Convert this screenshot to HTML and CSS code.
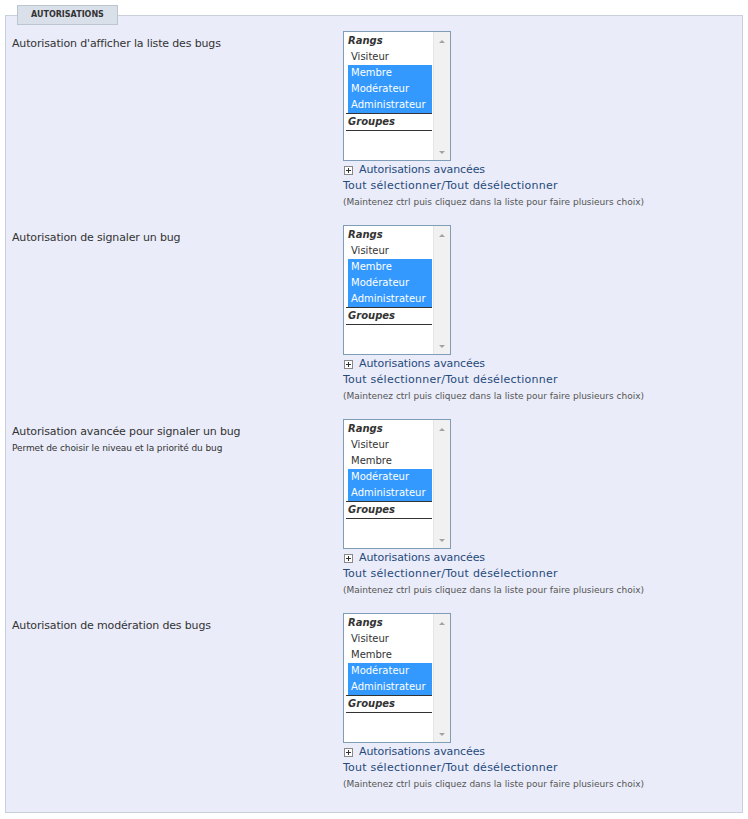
FILE: index.html
```html
<!DOCTYPE html>
<html lang="fr">
<head>
<meta charset="utf-8">
<title>Autorisations</title>
<link rel="stylesheet" href="styles.css">
</head>
<body>
<fieldset class="panel">
  <legend class="panel-title">AUTORISATIONS</legend>

  <div class="row">
    <div class="label">Autorisation d'afficher la liste des bugs</div>
    <div class="field">
      <div class="listbox">
        <div class="list">
          <div class="group">
            <div class="group-label">Rangs</div>
            <div class="opt">Visiteur</div>
            <div class="opt sel">Membre</div>
            <div class="opt sel">Modérateur</div>
            <div class="opt sel">Administrateur</div>
          </div>
          <div class="group">
            <div class="group-label">Groupes</div>
          </div>
        </div>
        <div class="scrollbar"><span class="arrow up"></span><span class="arrow down"></span></div>
      </div>
      <a class="advanced" href="#"><span class="plus"></span>Autorisations avancées</a>
      <a class="toggle" href="#">Tout sélectionner/Tout désélectionner</a>
      <div class="hint">(Maintenez ctrl puis cliquez dans la liste pour faire plusieurs choix)</div>
    </div>
  </div>

  <div class="row">
    <div class="label">Autorisation de signaler un bug</div>
    <div class="field">
      <div class="listbox">
        <div class="list">
          <div class="group">
            <div class="group-label">Rangs</div>
            <div class="opt">Visiteur</div>
            <div class="opt sel">Membre</div>
            <div class="opt sel">Modérateur</div>
            <div class="opt sel">Administrateur</div>
          </div>
          <div class="group">
            <div class="group-label">Groupes</div>
          </div>
        </div>
        <div class="scrollbar"><span class="arrow up"></span><span class="arrow down"></span></div>
      </div>
      <a class="advanced" href="#"><span class="plus"></span>Autorisations avancées</a>
      <a class="toggle" href="#">Tout sélectionner/Tout désélectionner</a>
      <div class="hint">(Maintenez ctrl puis cliquez dans la liste pour faire plusieurs choix)</div>
    </div>
  </div>

  <div class="row">
    <div class="label">Autorisation avancée pour signaler un bug
      <span class="sublabel">Permet de choisir le niveau et la priorité du bug</span></div>
    <div class="field">
      <div class="listbox">
        <div class="list">
          <div class="group">
            <div class="group-label">Rangs</div>
            <div class="opt">Visiteur</div>
            <div class="opt">Membre</div>
            <div class="opt sel">Modérateur</div>
            <div class="opt sel">Administrateur</div>
          </div>
          <div class="group">
            <div class="group-label">Groupes</div>
          </div>
        </div>
        <div class="scrollbar"><span class="arrow up"></span><span class="arrow down"></span></div>
      </div>
      <a class="advanced" href="#"><span class="plus"></span>Autorisations avancées</a>
      <a class="toggle" href="#">Tout sélectionner/Tout désélectionner</a>
      <div class="hint">(Maintenez ctrl puis cliquez dans la liste pour faire plusieurs choix)</div>
    </div>
  </div>

  <div class="row">
    <div class="label">Autorisation de modération des bugs</div>
    <div class="field">
      <div class="listbox">
        <div class="list">
          <div class="group">
            <div class="group-label">Rangs</div>
            <div class="opt">Visiteur</div>
            <div class="opt">Membre</div>
            <div class="opt sel">Modérateur</div>
            <div class="opt sel">Administrateur</div>
          </div>
          <div class="group">
            <div class="group-label">Groupes</div>
          </div>
        </div>
        <div class="scrollbar"><span class="arrow up"></span><span class="arrow down"></span></div>
      </div>
      <a class="advanced" href="#"><span class="plus"></span>Autorisations avancées</a>
      <a class="toggle" href="#">Tout sélectionner/Tout désélectionner</a>
      <div class="hint">(Maintenez ctrl puis cliquez dans la liste pour faire plusieurs choix)</div>
    </div>
  </div>
</fieldset>
</body>
</html>
```

FILE: styles.css
```css
html, body {
  margin: 0;
  padding: 0;
  background: #ffffff;
}

body {
  font-family: "DejaVu Sans", Verdana, sans-serif;
  font-size: 11px;
  color: #333333;
}

.panel {
  margin: 5px 0 0 5px;
  width: 738px;
  box-sizing: border-box;
  border: 1px solid #c9d0dc;
  background: #eaecf9;
  padding: 0 6px 11px 6px;
  min-inline-size: 0;
}

.panel-title {
  margin-left: 5px;
  padding: 0 13px;
  height: 20px;
  box-sizing: border-box;
  line-height: 18px;
  border: 1px solid #bcc5d0;
  background: #d9e0ea;
  font-size: 8px;
  font-weight: bold;
  color: #333;
}

.row {
  display: grid;
  grid-template-columns: 331px 1fr;
  padding: 6px 0 9px 0;
}

.label {
  padding-top: 5px;
  line-height: 16px;
  letter-spacing: -0.15px;
}

.sublabel {
  display: block;
  font-size: 9px;
  line-height: 16px;
  letter-spacing: -0.1px;
}

.field {
  display: flex;
  flex-direction: column;
  align-items: flex-start;
}

.listbox {
  width: 108px;
  height: 130px;
  box-sizing: border-box;
  border: 1px solid #7f9db9;
  background: #fff;
  display: flex;
  margin-bottom: 1px;
}

.list {
  flex: 1;
  padding: 1px 1px 0 2px;
}

.group {
  border-bottom: 1px solid #333;
}

.group-label {
  height: 16px;
  line-height: 16px;
  padding-left: 2px;
  font-style: italic;
  font-weight: bold;
  font-size: 10px;
  color: #333;
}

.opt {
  height: 16px;
  line-height: 16px;
  margin-left: 2px;
  padding-left: 3px;
  font-size: 10px;
  color: #333;
  white-space: nowrap;
}

.opt.sel {
  background: #3399ff;
  color: #ffffff;
}

.scrollbar {
  width: 17px;
  background: #f1f1f1;
  border-left: 1px solid #e6e6e6;
  display: flex;
  flex-direction: column;
  justify-content: space-between;
  align-items: center;
  padding: 8px 0 6px;
  box-sizing: border-box;
}

.arrow {
  width: 0;
  height: 0;
  border-left: 3px solid transparent;
  border-right: 3px solid transparent;
}

.arrow.up {
  border-bottom: 3px solid #a3a3a3;
}

.arrow.down {
  border-top: 3px solid #a3a3a3;
}

.advanced, .toggle {
  color: #264a7b;
  text-decoration: none;
  line-height: 16px;
  height: 16px;
}

.advanced {
  display: flex;
  align-items: center;
  letter-spacing: -0.1px;
}

.toggle {
  letter-spacing: 0.25px;
}

.plus {
  width: 9px;
  height: 9px;
  box-sizing: border-box;
  border: 1px solid #888;
  background: #fff;
  margin: 0 6px 0 1px;
  background-image:
    linear-gradient(#333, #333),
    linear-gradient(#333, #333);
  background-size: 5px 1px, 1px 5px;
  background-position: center, center;
  background-repeat: no-repeat;
}

.hint {
  font-size: 9px;
  line-height: 16px;
  color: #555;
}
```
